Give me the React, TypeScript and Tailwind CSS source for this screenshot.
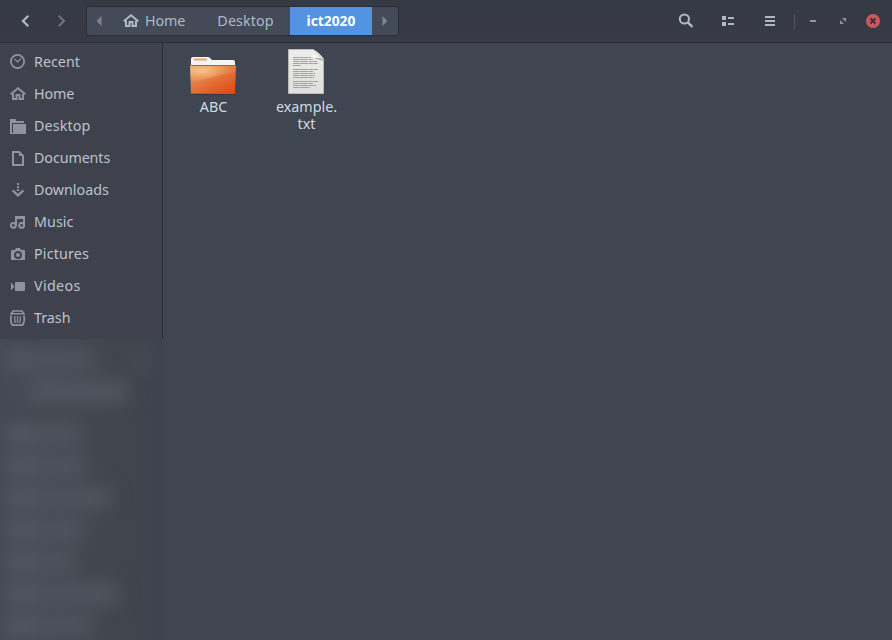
import React from "react";

type IconProps = { children: React.ReactNode; className?: string };

function Glyph({ children, className = "" }: IconProps) {
  return (
    <svg
      width="16"
      height="16"
      viewBox="0 0 16 16"
      fill="none"
      stroke="currentColor"
      strokeWidth="2"
      className={"shrink-0 " + className}
    >
      {children}
    </svg>
  );
}

const homePath = (
  <>
    <path d="M0.7 8.2 8 2.2l7.3 6" />
    <path d="M3 7.5V13h3.5V9h3v4H13V7.5" />
  </>
);

const places: { label: string; spacing: string; icon: React.ReactNode }[] = [
  {
    label: "Recent",
    spacing: "tracking-[0px]",
    icon: (
      <>
        <circle cx="7.5" cy="7.5" r="6.6" strokeWidth="1.8" />
        <path d="M4.8 5 7.5 7.8 11 4.6" strokeWidth="1.2" />
      </>
    ),
  },
  { label: "Home", spacing: "tracking-[-0.1px]", icon: homePath },
  {
    label: "Desktop",
    spacing: "tracking-[0.1px]",
    icon: (
      <g fill="currentColor" stroke="none">
        <path d="M0 1h6v2h8v2H2v10H0z" />
        <path d="M3 6h13v10H0v-1h3z" />
      </g>
    ),
  },
  {
    label: "Documents",
    spacing: "tracking-[-0.1px]",
    icon: (
      <>
        <path d="M3 2h6.2L13 5.8V15H3z" />
        <path d="M9 1l5 5H9z" fill="currentColor" stroke="none" />
      </>
    ),
  },
  {
    label: "Downloads",
    spacing: "tracking-[0px]",
    icon: (
      <>
        <path d="M8 1v9" strokeDasharray="2 1" />
        <path d="M2.6 8.4 8 13.4l5.4-5" strokeWidth="2.2" />
      </>
    ),
  },
  {
    label: "Music",
    spacing: "tracking-[0.05px]",
    icon: (
      <>
        <circle cx="3.3" cy="11.4" r="2.4" />
        <circle cx="11.6" cy="11.4" r="2.4" />
        <path d="M6 12V3h8v9" />
        <path d="M6 3.5h8" strokeWidth="3" />
      </>
    ),
  },
  {
    label: "Pictures",
    spacing: "tracking-[0.15px]",
    icon: (
      <path
        fill="currentColor"
        stroke="none"
        fillRule="evenodd"
        d="M2 4h3l1-2h4l1 2h3q1 0 1 1v9H1V5q0-1 1-1zM8 5a4 4 0 1 0 0 8 4 4 0 0 0 0-8zM8 7a2 2 0 1 1 0 4 2 2 0 0 1 0-4z"
      />
    ),
  },
  {
    label: "Videos",
    spacing: "tracking-[0.35px]",
    icon: (
      <g fill="currentColor" stroke="none">
        <path d="M1 4.5 4.5 8.5 1 12.5z" />
        <rect x="5" y="4" width="10" height="9" rx="1" />
      </g>
    ),
  },
  {
    label: "Trash",
    spacing: "tracking-[0px]",
    icon: (
      <>
        <path d="M0 3.8h15M1.6 3.5 3 1h9l1.4 2.5" strokeWidth="1.6" />
        <path d="M1.3 5.4C0 10 .9 13 2.6 15.2h9.8C14.1 13 15 10 13.7 5.4" strokeWidth="1.8" />
        <path d="M5 6.3c-1.1 2.7-.5 4.7.3 6.7M7.5 6.3V13M10 6.3c1.1 2.7.5 4.7-.3 6.7" strokeWidth="1.3" />
      </>
    ),
  },
];

const hiddenRows = [
  { height: "h-8", icon: "bg-[#545862]", width: "w-[66px]", bar: "bg-[#4f545e]" },
  { height: "h-8", icon: "bg-[#474b55]", width: "w-[98px]", bar: "bg-[#525761]" },
  { height: "h-[42px] pt-[10px]", icon: "bg-[#545862]", width: "w-[52px]", bar: "bg-[#50555f]" },
  { height: "h-8", icon: "bg-[#545862]", width: "w-[56px]", bar: "bg-[#50555f]" },
  { height: "h-8", icon: "bg-[#545862]", width: "w-[82px]", bar: "bg-[#50555f]" },
  { height: "h-8", icon: "bg-[#545862]", width: "w-[56px]", bar: "bg-[#50555f]" },
  { height: "h-8", icon: "bg-[#545862]", width: "w-[46px]", bar: "bg-[#50555f]" },
  { height: "h-8", icon: "bg-[#545862]", width: "w-[90px]", bar: "bg-[#50555f]" },
  { height: "h-8", icon: "bg-[#545862]", width: "w-[62px]", bar: "bg-[#50555f]" },
];

function Header() {
  return (
    <header className="flex h-[43px] shrink-0 items-start border-b border-[#2b2e37] bg-linear-to-b from-[#353944] to-[#383b45] text-[#afb8c6]">
      <div className="flex h-[42px] w-[86px] shrink-0 items-center pl-[18px]">
        <Glyph>
          <path d="M10.3 2.8 5 8l5.3 5.2" strokeWidth="2.2" />
        </Glyph>
        <Glyph className="ml-[19px] text-[#6b717d]">
          <path d="M5.7 2.8 11 8l-5.3 5.2" strokeWidth="2.2" />
        </Glyph>
      </div>
      <nav className="mt-[6px] flex h-[30px] w-[313px] items-stretch overflow-hidden rounded-[3px] border border-[#2b2e37] bg-[#444a58] text-[14.3px]">
        <div className="flex w-[28px] items-center pl-[9px]">
          <svg width="6" height="10" viewBox="0 0 6 10" fill="#7c8492">
            <path d="M5.5 0v10L.5 5z" />
          </svg>
        </div>
        <div className="flex w-[86px] items-center pl-[8px]">
          <Glyph>{homePath}</Glyph>
          <span className="ml-[6px] whitespace-nowrap tracking-[-0.1px]">Home</span>
        </div>
        <div className="flex w-[89px] items-center justify-center whitespace-nowrap tracking-[0.1px]">
          Desktop
        </div>
        <div className="flex w-[82px] items-center justify-center bg-[#5294e2] text-[13.8px] font-bold text-white">
          ict2020
        </div>
        <div className="flex flex-1 items-center pl-[10px]">
          <svg width="6" height="10" viewBox="0 0 6 10" fill="#7c8492">
            <path d="M.5 0v10l5-5z" />
          </svg>
        </div>
      </nav>
      <div className="ml-auto flex h-[42px] items-center">
        <Glyph>
          <circle cx="6.4" cy="6" r="4.6" />
          <path d="M9.6 9.2l4.8 4.7" strokeWidth="2.4" />
        </Glyph>
        <Glyph className="ml-[27px]">
          <path d="M1 3h4v4H1zM1 9h4v4H1zM7 4h6v2H7zM7 10h6v2H7z" fill="currentColor" stroke="none" />
        </Glyph>
        <Glyph className="ml-[26px]">
          <path d="M2 4h10M2 8h10M2 12h10" />
        </Glyph>
        <span className="ml-[15px] h-[15px] w-px bg-[#505561]" />
        <span className="ml-[15px] h-[2px] w-[6px] bg-[#90949e]" />
        <svg width="6" height="6" viewBox="0 0 6 6" className="ml-[24px]" fill="#90949e">
          <path d="M2 0h4v4zM0 2v4h4z" />
        </svg>
        <svg width="14" height="14" viewBox="0 0 14 14" className="mr-[12px] ml-[20px]">
          <circle cx="7" cy="7" r="7" fill="#cc575d" />
          <path d="M4.5 4.5l5 5m0-5l-5 5" stroke="#323743" strokeWidth="2" />
        </svg>
      </div>
    </header>
  );
}

function Sidebar() {
  return (
    <aside className="flex w-[163px] shrink-0 flex-col bg-[#3f424c]">
      <ul className="h-[296px] shrink-0 border-r border-[#2b2e37] pt-[3px] text-[14.3px] text-[#bac3cf]">
        {places.map((place) => (
          <li key={place.label} className="flex h-8 items-center gap-2 pl-[10px]">
            <Glyph className="text-[#90939e]">{place.icon}</Glyph>
            <span className={"whitespace-nowrap " + place.spacing}>{place.label}</span>
          </li>
        ))}
      </ul>
      <div className="min-h-0 flex-1 overflow-hidden bg-linear-to-r from-[#444852] via-[#42464f] via-60% to-[#3f434d]">
        <div className="pt-[5px] blur-[9px]">
          {hiddenRows.map((row, i) => (
            <div key={i} className={"flex items-center pl-[5px] " + row.height}>
              <span className={"h-5 w-[24px] " + row.icon} />
              <span className={"h-[20px] " + row.width + " " + row.bar} />
              {i === 0 && <span className="ml-[36px] h-4 w-[20px] bg-[#494d57]" />}
            </div>
          ))}
        </div>
      </div>
    </aside>
  );
}

function FolderIcon() {
  return (
    <svg width="48" height="42" viewBox="0 0 48 42">
      <defs>
        <linearGradient id="folder" x1="0" y1="0" x2=".75" y2="1">
          <stop offset="0" stopColor="#e6a672" />
          <stop offset=".5" stopColor="#e37a41" />
          <stop offset="1" stopColor="#df4d17" />
        </linearGradient>
        <radialGradient id="shine" cx=".28" cy=".35" r=".65">
          <stop offset="0" stopColor="#f8d9a4" stopOpacity=".75" />
          <stop offset="1" stopColor="#ffb56f" stopOpacity=".08" />
        </radialGradient>
      </defs>
      <path d="M2 4q0-2 2-2h15q1 0 2 1l2 2h21q2 0 2 2v6H2z" fill="#f5f4f2" />
      <rect x="5" y="3.5" width="13" height="2" fill="#eda376" />
      <path d="M2 38h44v2H2z" fill="#292d36" opacity=".6" />
      <path d="M1 10h46l-1 28q0 1-1 1H3q-1 0-1-1z" fill="url(#folder)" />
      <path d="M1 10h46v7c-12 1-24 7-45 10z" fill="url(#shine)" />
      <path d="M1.5 10.5h45M2.5 38.5h43" stroke="#d3521c" />
    </svg>
  );
}

function FileIcon() {
  return (
    <svg width="38" height="48" viewBox="0 0 38 48">
      <defs>
        <linearGradient id="paper" x1="0" y1="0" x2="0" y2="1">
          <stop offset="0" stopColor="#ededeb" />
          <stop offset="1" stopColor="#dededd" />
        </linearGradient>
        <linearGradient id="fold" x1="0" y1="1" x2="1" y2="0">
          <stop offset=".25" stopColor="#ffffff" />
          <stop offset=".7" stopColor="#c5c5c3" />
        </linearGradient>
      </defs>
      <path d="M1.5 1.5H26q6 3 10.5 9.5v34.5h-35z" fill="url(#paper)" stroke="#b9bab8" />
      <path d="M23 9l13 4v-3z" fill="#b4b4b3" />
      <path d="M25.5 1.5q1 4 0 8.5 6-1.500 11 1-4-7-11-9.500z" fill="url(#fold)" />
      <path
        d="M6 9.5h18M6 11.500h20M6 13.500h24M6 15.500h25M6 17.500h8M6 21.500h25M6 23.500h20M6 25.500h22M6 27.500h22M6 29.500h21M6 33.500h25M6 35.500h20M6 37.500h23M6 39.500h17"
        stroke="#a3a3a1"
        strokeDasharray="6 .4 9 .4 4 .4"
        strokeWidth="1"
      />
    </svg>
  );
}

export default function App() {
  return (
    <div className="flex h-[640px] w-[892px] flex-col overflow-hidden bg-[#404550] font-['Noto_Sans','Open_Sans',sans-serif]">
      <Header />
      <div className="flex min-h-0 flex-1">
        <Sidebar />
        <main className="flex flex-1 items-start bg-[#404651] text-center text-[14.3px] leading-[17px] text-[#d3dae3]">
          <figure className="ml-[3px] flex w-[93px] flex-col items-center pt-[12px]">
            <FolderIcon />
            <figcaption className="mt-[1px] pl-[2px]">ABC</figcaption>
          </figure>
          <figure className="flex w-[93px] flex-col items-center pt-[5px]">
            <FileIcon />
            <figcaption className="mt-[2px] ml-[2px] w-[64px] break-all">example.txt</figcaption>
          </figure>
        </main>
      </div>
    </div>
  );
}
